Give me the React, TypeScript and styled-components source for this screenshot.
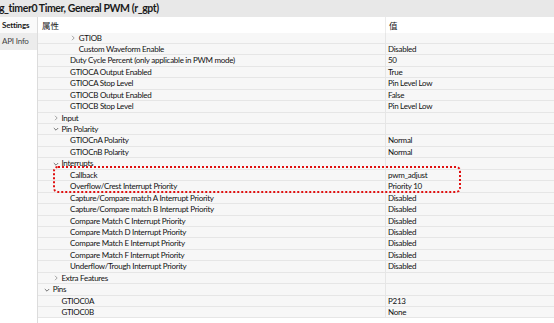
import styled, { createGlobalStyle } from 'styled-components';

type Row = {
  label: string;
  value?: string;
  level: number;
  toggle?: 'open' | 'closed';
};

const rows: Row[] = [
  { label: 'GTIOB', level: 3, toggle: 'closed' },
  { label: 'Custom Waveform Enable', value: 'Disabled', level: 3 },
  { label: 'Duty Cycle Percent (only applicable in PWM mode)', value: '50', level: 2 },
  { label: 'GTIOCA Output Enabled', value: 'True', level: 2 },
  { label: 'GTIOCA Stop Level', value: 'Pin Level Low', level: 2 },
  { label: 'GTIOCB Output Enabled', value: 'False', level: 2 },
  { label: 'GTIOCB Stop Level', value: 'Pin Level Low', level: 2 },
  { label: 'Input', level: 1, toggle: 'closed' },
  { label: 'Pin Polarity', level: 1, toggle: 'open' },
  { label: 'GTIOCnA Polarity', value: 'Normal', level: 2 },
  { label: 'GTIOCnB Polarity', value: 'Normal', level: 2 },
  { label: 'Interrupts', level: 1, toggle: 'open' },
  { label: 'Callback', value: 'pwm_adjust', level: 2 },
  { label: 'Overflow/Crest Interrupt Priority', value: 'Priority 10', level: 2 },
  { label: 'Capture/Compare match A Interrupt Priority', value: 'Disabled', level: 2 },
  { label: 'Capture/Compare match B Interrupt Priority', value: 'Disabled', level: 2 },
  { label: 'Compare Match C Interrupt Priority', value: 'Disabled', level: 2 },
  { label: 'Compare Match D Interrupt Priority', value: 'Disabled', level: 2 },
  { label: 'Compare Match E Interrupt Priority', value: 'Disabled', level: 2 },
  { label: 'Compare Match F Interrupt Priority', value: 'Disabled', level: 2 },
  { label: 'Underflow/Trough Interrupt Priority', value: 'Disabled', level: 2 },
  { label: 'Extra Features', level: 1, toggle: 'closed' },
  { label: 'Pins', level: 0, toggle: 'open' },
  { label: 'GTIOC0A', value: 'P213', level: 1 },
  { label: 'GTIOC0B', value: 'None', level: 1 },
];

const Arrow = ({ open }: { open: boolean }) => (
  <ArrowSvg viewBox="0 0 6 6" width="6" height="6">
    {open ? (
      <polyline points="0.8,2 3,4.2 5.2,2" fill="none" stroke="#666" strokeWidth="0.9" />
    ) : (
      <polyline points="2,0.8 4.2,3 2,5.2" fill="none" stroke="#999" strokeWidth="0.9" />
    )}
  </ArrowSvg>
);

const App = () => {
  return (
    <Page>
      <GlobalStyle />
      <TitleBar>g_timer0 Timer, General PWM (r_gpt)</TitleBar>
      <Body>
        <Sidebar>
          <Tab $active>Settings</Tab>
          <Tab>API Info</Tab>
        </Sidebar>
        <Table>
          <HeaderRow>
            <HeaderCell>属性</HeaderCell>
            <HeaderCell $value>值</HeaderCell>
          </HeaderRow>
          {rows.map((r, i) => (
            <DataRow key={i}>
              <LabelCell $level={r.level}>
                {r.toggle && <Arrow open={r.toggle === 'open'} />}
                {r.label}
              </LabelCell>
              <ValueCell>{r.value}</ValueCell>
            </DataRow>
          ))}
          <Highlight />
        </Table>
      </Body>
    </Page>
  );
};

export default App;

const GlobalStyle = createGlobalStyle`
  html, body {
    margin: 0;
    padding: 0;
    background: #ffffff;
  }
  body {
    font-family: Lato, "Noto Sans CJK SC", sans-serif;
    color: #1a1a1a;
    overflow: hidden;
  }
`;

const Page = styled.div`
  width: 554px;
  height: 323px;
  display: flex;
  flex-direction: column;
  overflow: hidden;
`;

const TitleBar = styled.div`
  height: 17px;
  flex: none;
  background: #e8e8e8;
  font-family: Lato, sans-serif;
  font-size: 10.5px;
  font-weight: 700;
  letter-spacing: -0.42px;
  line-height: 17px;
  color: #1a1a1a;
  white-space: nowrap;
  text-indent: -1px;
`;

const Body = styled.div`
  flex: 1;
  display: flex;
  min-height: 0;
`;

const Sidebar = styled.div`
  width: 37px;
  flex: none;
  border-right: 1px solid #dcdcdc;
  background: #ffffff;
  display: flex;
  flex-direction: column;
`;

const Tab = styled.div<{ $active?: boolean }>`
  height: ${(p) => (p.$active ? '16px' : '17px')};
  line-height: ${(p) => (p.$active ? '16px' : '17px')};
  padding-left: 2px;
  font-size: 8px;
  letter-spacing: -0.2px;
  font-weight: ${(p) => (p.$active ? 700 : 400)};
  background: ${(p) => (p.$active ? '#fafafa' : '#ececec')};
  color: ${(p) => (p.$active ? '#1a1a1a' : '#444')};
  white-space: nowrap;
  overflow: hidden;
`;

const Table = styled.div`
  flex: 1;
  position: relative;
  display: flex;
  flex-direction: column;
`;

const HeaderRow = styled.div`
  display: grid;
  grid-template-columns: 347px 1fr;
  height: 15.5px;
  background: #ffffff;
  flex: none;
`;

const HeaderCell = styled.div<{ $value?: boolean }>`
  font-size: 8.5px;
  line-height: 16.5px;
  padding-left: ${(p) => (p.$value ? '3px' : '4px')};
  border-left: ${(p) => (p.$value ? '1px solid #ececec' : 'none')};
  font-family: "Noto Sans CJK SC", sans-serif;
`;

const DataRow = styled.div`
  display: grid;
  grid-template-columns: 347px 1fr;
  height: 11.44px;
  flex: none;
  box-sizing: border-box;
  background: #f7f7f7;
  border-bottom: 1px solid #e6e6e6;
  font-size: 8px;
  letter-spacing: -0.28px;
  line-height: 10.8px;
`;

const LabelCell = styled.div<{ $level: number }>`
  position: relative;
  padding-left: ${(p) => 14.7 + p.$level * 8.7}px;
  white-space: nowrap;
  overflow: hidden;
  color: #111;
`;

const ArrowSvg = styled.svg`
  position: absolute;
  top: 2.4px;
  margin-left: -8.5px;
`;

const ValueCell = styled.div`
  border-left: 1px solid #e6e6e6;
  padding-left: 2px;
  white-space: nowrap;
  overflow: hidden;
  color: #111;
`;

const Highlight = styled.div`
  position: absolute;
  left: 15px;
  top: 149px;
  width: 408px;
  height: 27px;
  box-sizing: border-box;
  border: 2px dotted #e01010;
  border-radius: 5px;
  pointer-events: none;
`;
